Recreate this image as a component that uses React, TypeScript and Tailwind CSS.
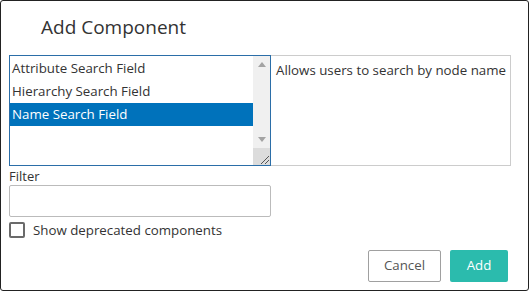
const items = ["Attribute Search Field", "Hierarchy Search Field", "Name Search Field"];

export default function App() {
  return (
    <div className="w-[530px] h-[292px] bg-white">
      <div
        className="w-[529px] h-[291px] border border-[#222] rounded-[3px] bg-white text-[#333] flex flex-col"
        style={{ fontFamily: '"Open Sans", "Noto Sans", sans-serif' }}
      >
        <h1 className="pl-[40px] pt-[12px] h-[54px] text-[19px] leading-[28px] text-[#333]">Add Component</h1>

        <div className="flex pl-[8px]">
          {/* list box */}
          <div className="w-[262px] h-[111px] border border-[#2b6ea8] flex">
            <div className="flex-1 pt-[1px]">
              {items.map((item, i) => (
                <div
                  key={item}
                  className={`h-[23px] pl-[2px] text-[13.3px] leading-[23px] ${
                    i === 2 ? "bg-[#0072bb] text-white" : "text-[#333]"
                  }`}
                >
                  {item}
                </div>
              ))}
            </div>
            <div className="w-[17px] bg-[#f0f0f0] flex flex-col items-center">
              <div className="h-[92px] w-full flex flex-col items-center justify-between pt-[6px] pb-[6px]">
                <svg width="8" height="5" viewBox="0 0 8 5">
                  <path d="M0 5 L4 0 L8 5 Z" fill="#a3a3a3" />
                </svg>
                <svg width="8" height="5" viewBox="0 0 8 5">
                  <path d="M0 0 L4 5 L8 0 Z" fill="#a3a3a3" />
                </svg>
              </div>
              <div className="flex-1 w-full bg-[#dcdcdc] flex items-end justify-end">
                <svg width="12" height="12" viewBox="0 0 12 12">
                  <path d="M11 3 L3 11 M11 7 L7 11" stroke="#555" strokeWidth="1" />
                </svg>
              </div>
            </div>
          </div>

          {/* description */}
          <div className="w-[240px] h-[111px] border border-[#ccc] border-l-0 pl-[5px] pt-[4px] text-[13.3px] leading-[20px] text-[#333]">
            Allows users to search by node name
          </div>
        </div>

        <label className="pl-[8px] pt-[1px] text-[13px] leading-[18px] text-[#333]">Filter</label>
        <input
          type="text"
          className="ml-[8px] w-[262px] h-[32px] border border-[#bbb] rounded-[2px] outline-none"
        />

        <div className="flex items-center pl-[8px] pt-[4px] gap-[8px]">
          <div className="w-[16px] h-[16px] border-2 border-[#6a6a6a] rounded-[2px] bg-white" />
          <span className="text-[13.3px] leading-[18px] text-[#333]">Show deprecated components</span>
        </div>

        <div className="flex justify-end gap-[9px] pr-[20px] pt-[11px]">
          <button className="w-[73px] h-[32px] border border-[#a0a0a0] rounded-[2px] text-[13.3px] text-[#555] bg-white">
            Cancel
          </button>
          <button className="w-[58px] h-[32px] rounded-[2px] text-[13.3px] text-white bg-[#2bbbad]">
            Add
          </button>
        </div>
      </div>
    </div>
  );
}
